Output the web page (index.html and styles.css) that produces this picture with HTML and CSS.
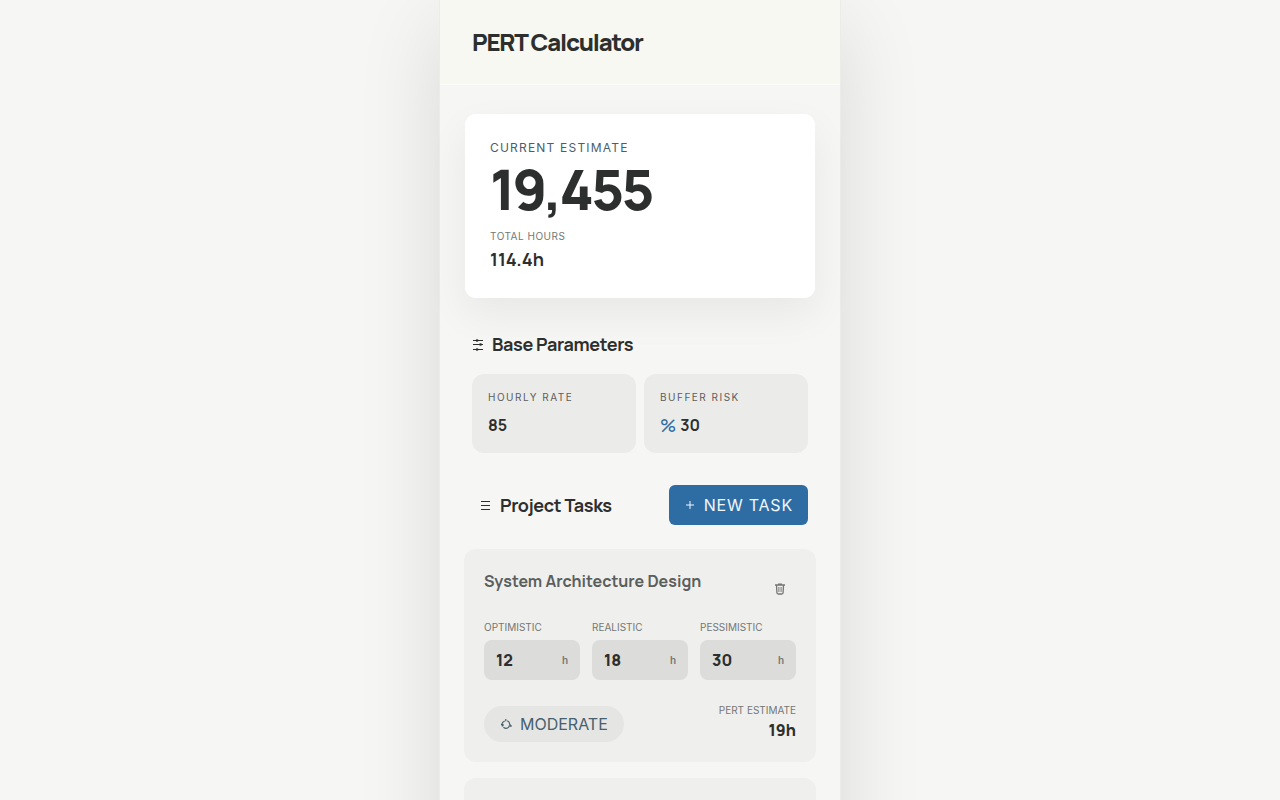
FILE: index.html
```html
<!DOCTYPE html>
<html lang="en">
<head>
<meta charset="utf-8">
<meta name="viewport" content="width=device-width, initial-scale=1">
<title>PERT Calculator</title>
<link rel="stylesheet" href="styles.css">
</head>
<body>
<div class="app">
  <header class="app-header"><h1>PERT Calculator</h1></header>
  <main>
    <section class="summary">
      <h2 class="summary-label">CURRENT ESTIMATE</h2>
      <output class="summary-total">19,455</output>
      <p class="hours-label">TOTAL HOURS</p>
      <p class="hours-value">114.4h</p>
    </section>

    <section class="parameters">
      <h2 class="section-title">
        <svg class="icon" viewBox="0 0 12 12" fill="none" stroke="currentColor" aria-hidden="true"><path d="M1 1.500h10M1 5.500h10M1 10.500h10"/><path stroke-width="2.600" stroke-linecap="round" d="M5 1.500h.1M8.500 5.500h.1M5 10.500h.1"/></svg>
        Base Parameters
      </h2>
      <div class="parameter-grid">
        <div class="parameter">
          <label for="rate">HOURLY RATE</label>
          <div class="parameter-value"><input id="rate" type="text" inputmode="numeric" value="85"></div>
        </div>
        <div class="parameter">
          <label for="buffer">BUFFER RISK</label>
          <div class="parameter-value"><span class="percent">%</span><input id="buffer" type="text" inputmode="numeric" value="30"></div>
        </div>
      </div>
    </section>

    <section class="tasks">
      <div class="tasks-head">
        <h2 class="section-title">
          <svg class="icon" viewBox="0 0 12 12" fill="none" stroke="currentColor" aria-hidden="true"><path d="M1 2.500h9M1 6.500h9M1 10.500h9"/></svg>
          Project Tasks
        </h2>
        <button class="new-task" type="button">
          <svg class="icon" viewBox="0 0 12 12" fill="none" stroke="currentColor" aria-hidden="true"><path d="M6 2v8M2 6h8"/></svg>
          NEW TASK
        </button>
      </div>

      <article class="task">
        <div class="task-head">
          <input class="task-name" type="text" value="System Architecture Design" aria-label="Task name">
          <button class="delete" type="button" aria-label="Delete task">
            <svg class="icon" viewBox="0 0 12 12" fill="none" stroke="currentColor" aria-hidden="true"><path stroke-width="1.300" d="M1 2h10M4 1.200h4M2.500 2l.4 7.800q.1 1.200 1.300 1.200h3.600q1.200 0 1.300-1.200L9.500 2"/><path d="M4.900 4v5M7.100 4v5"/></svg>
          </button>
        </div>
        <div class="estimates">
          <div class="estimate"><label for="opt">OPTIMISTIC</label><div class="field"><input id="opt" type="text" inputmode="numeric" value="12"><span>h</span></div></div>
          <div class="estimate"><label for="real">REALISTIC</label><div class="field"><input id="real" type="text" inputmode="numeric" value="18"><span>h</span></div></div>
          <div class="estimate"><label for="pess">PESSIMISTIC</label><div class="field"><input id="pess" type="text" inputmode="numeric" value="30"><span>h</span></div></div>
        </div>
        <div class="task-foot">
          <span class="badge">
            <svg class="icon" viewBox="0 0 12 12" fill="none" stroke="currentColor" stroke-width="1.200" aria-hidden="true"><path d="M5.800 1v2.200M4.800 3A4 3.700 0 0 0 2.600 8.500M1 6.500h2v1.600M3.400 9.300A4 3.700 0 0 0 9 8.900M7.200 2.800A4 3.700 0 0 1 9.600 6.500M8.500 8.200h3.200M9.600 6.500l1.600 1.300"/></svg>
            MODERATE
          </span>
          <div class="result"><span class="result-label">PERT ESTIMATE</span><output>19h</output></div>
        </div>
      </article>
      <article class="task task-empty"></article>
    </section>
  </main>
</div>
</body>
</html>
```
FILE: styles.css
```css
* { box-sizing: border-box; }
body {
  margin: 0;
  background: #f6f6f4;
  color: #2d2f2e;
  font-family: Inter, "Liberation Sans", sans-serif;
}
h1, h2, p { margin: 0; }
input {
  width: 100%;
  min-width: 0;
  margin: 0;
  padding: 0;
  border: 0;
  outline: 0;
  background: transparent;
  color: inherit;
}
h1, .summary-total, .hours-value, .section-title, .parameter-value, .parameter-value input, .task-name, .field input, .result output {
  font-family: Manrope, Inter, sans-serif;
}
.icon { width: 12px; height: 12px; flex: none; }

.app {
  max-width: 400px;
  min-height: 100vh;
  margin: 0 auto;
  background: #f6f6f4;
  box-shadow: 0 0 0 1px #ebebe9, 0 24px 80px rgba(0, 0, 0, 0.12);
}
.app-header {
  padding: 24px 32px;
  background: #f7f8f2;
  border-bottom: 1px solid #fcfcfa;
}
h1 { font-size: 24px; line-height: 36px; font-weight: 800; letter-spacing: -0.05em; }
main { padding: 28px 24px 24px; }

.summary {
  display: flex;
  flex-direction: column;
  padding: 24px 25px;
  border: 1px solid transparent;
  border-radius: 12px;
  background: #fff;
  background-clip: padding-box;
  box-shadow: 0 16px 40px rgba(0, 0, 0, 0.06);
}
.summary-label { font-size: 12px; line-height: 20px; font-weight: 400; letter-spacing: 0.1em; color: #47606e; }
.summary-total { font-size: 56px; line-height: 62px; font-weight: 800; letter-spacing: -0.05em; }
.hours-label { margin-top: 8px; font-size: 10px; line-height: 16px; letter-spacing: 0.05em; color: #747775; }
.hours-value { margin-top: 2px; padding-bottom: 2px; font-size: 18px; line-height: 26px; font-weight: 700; }

.parameters { margin: 32px 8px; }
.section-title {
  display: flex;
  align-items: center;
  gap: 8px;
  font-size: 18px;
  line-height: 27px;
  font-weight: 700;
  letter-spacing: -0.02em;
}
.parameter-grid { display: grid; grid-template-columns: 1fr 1fr; gap: 8px; margin-top: 16px; }
.parameter { padding: 16px; border-radius: 12px; background: #ebebe9; }
.parameter label { display: block; font-size: 10px; line-height: 15px; letter-spacing: 0.15em; color: #5b5e5c; }
.parameter-value { display: flex; gap: 4px; margin-top: 8px; font-size: 16px; line-height: 24px; font-weight: 700; }
.parameter-value input { height: 24px; font-size: 16px; font-weight: 700; }
.percent { color: #2e6da4; font-size: 18px; font-weight: 500; }

.tasks-head { display: flex; align-items: center; justify-content: space-between; padding: 0 8px 0 16px; }
.new-task {
  display: flex;
  align-items: center;
  gap: 8px;
  height: 40px;
  padding: 0 15px;
  border: 0;
  border-radius: 6px;
  background: #2e6da4;
  color: #f2f7fc;
  font-family: inherit;
  font-size: 16px;
  letter-spacing: 0.05em;
}
.task { margin-top: 16px; padding: 20px; border-radius: 12px; background: #efefed; }
.tasks-head + .task { margin-top: 24px; }
.task-empty { height: 120px; }
.task-head { display: flex; align-items: flex-start; }
.task-name { flex: 1; height: 24px; font-size: 16px; font-weight: 700; color: #5b5e5c; }
.delete {
  display: flex;
  align-items: center;
  justify-content: center;
  width: 32px;
  height: 40px;
  padding: 0;
  border: 0;
  background: transparent;
  color: #747775;
}
.estimates { display: grid; grid-template-columns: repeat(3, 1fr); gap: 12px; margin-top: 11px; }
.estimate label { display: block; margin-bottom: 5px; font-size: 10px; line-height: 15px; color: #747775; }
.field { display: flex; align-items: center; height: 40px; padding: 0 12px; border-radius: 8px; background: #dcdcda; }
.field input { height: 24px; font-size: 16px; font-weight: 800; }
.field span { font-size: 10px; font-weight: 600; color: #747775; }
.task-foot { display: flex; align-items: flex-end; justify-content: space-between; margin-top: 22px; }
.badge {
  display: flex;
  align-items: center;
  gap: 8px;
  height: 36px;
  padding: 0 16px;
  border-radius: 18px;
  background: #e5e6e4;
  color: #47606e;
  font-size: 16px;
}
.result { display: flex; flex-direction: column; align-items: flex-end; }
.result-label { font-size: 10px; line-height: 16px; color: #747775; }
.result output { font-size: 16px; line-height: 24px; font-weight: 800; }
```
